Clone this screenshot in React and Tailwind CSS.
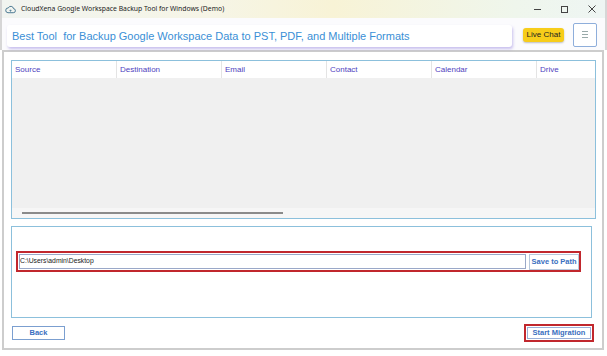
import React from "react";

function CloudIcon() {
  return (
    <svg width="11" height="11" viewBox="0 0 12 12" fill="none">
      <path d="M3.2 9.5h5.8a2.2 2.2 0 0 0 .3-4.4A3 3 0 0 0 3.6 4.3 2.6 2.6 0 0 0 3.2 9.5z" stroke="#3d6f8a" strokeWidth="1" />
      <path d="M5 7.4l1-1 1 1M6 6.4v2" stroke="#3d6f8a" strokeWidth="0.8" />
    </svg>
  );
}

const cols = ["Source", "Destination", "Email", "Contact", "Calendar", "Drive"];

export default function App() {
  return (
    <div className="w-[607px] h-[356px] bg-white overflow-hidden relative" style={{ fontFamily: '"Liberation Sans", Arial, sans-serif' }}>
      {/* Title bar */}
      <div className="h-[18px] flex items-center bg-[linear-gradient(90deg,#f1f4f0_0%,#f6f5e6_35%,#f8f3d6_55%,#eff6ec_85%,#eef5f3_100%)] border-l-2 border-r-2 border-[#d6d6d6]">
        <div className="ml-[3px] mt-[1px]"><CloudIcon /></div>
        <span className="ml-[5px] text-[6.8px] text-[#222]" style={{ fontFamily: '"Noto Sans", sans-serif' }}>CloudXena Google Workspace Backup Tool for Windows (Demo)</span>
        <div className="ml-auto flex items-center text-[#333]">
          <div className="w-[7px] h-px bg-[#444] mr-[20px]" />
          <div className="w-[7px] h-[7px] border border-[#444] mr-[20px]" />
          <svg width="8" height="8" viewBox="0 0 8 8" className="mr-[9px]"><path d="M0.5 0.5l7 7M7.5 0.5l-7 7" stroke="#444" strokeWidth="1" /></svg>
        </div>
      </div>
      {/* Header row */}
      <div className="h-[32px] flex items-center bg-[#fbfbfd] border-l-2 border-r-2 border-[#d6d6d6]">
        <div className="ml-[5px] mt-[4px] w-[505px] h-[22px] bg-white rounded-[3px] shadow-[1px_2px_3px_rgba(140,120,220,0.45)] flex items-center pl-[5px]">
          <span className="text-[11px] text-[#3a8fd6] whitespace-pre">Best Tool  for Backup Google Workspace Data to PST, PDF, and Multiple Formats</span>
        </div>
        <div className="ml-[11px] mt-[2px] w-[41px] h-[14px] bg-[#f7cd1a] rounded-[3px] shadow-[0_1px_2px_rgba(0,0,0,0.25)] flex items-center justify-center text-[8px] text-[#222]">Live Chat</div>
        <div className="ml-[9px] mt-[1px] w-[24px] h-[24px] bg-white border border-[#8eaedb] rounded-[2px] flex items-center justify-center">
          <div className="flex flex-col gap-[2px]">
            <div className="w-[6px] h-px bg-[#9aa]" />
            <div className="w-[6px] h-px bg-[#9aa]" />
            <div className="w-[6px] h-px bg-[#9aa]" />
          </div>
        </div>
      </div>
      {/* Group box */}
      <div className="ml-[2px] w-[602px] h-[300px] border-2 border-[#cdcdcd] bg-white flex flex-col">
        {/* Table panel */}
        <div className="mt-[8px] ml-[7px] w-[585px] h-[159px] border border-[#8cc0dc] bg-[#f0f0f0] flex flex-col overflow-hidden">
          <div className="h-[17px] bg-white flex shrink-0">
            {cols.map((c, i) => (
              <div key={c} className={"w-[105px] shrink-0 h-full flex items-center pl-[3px] text-[8px] text-[#4f3fc0] " + (i < 5 ? "border-r border-[#e4e4e4]" : "")}>{c}</div>
            ))}
          </div>
          <div className="flex-1" />
          <div className="h-[10px] bg-[#f6f6f6] flex items-center">
            <div className="ml-[10px] w-[261px] h-[1.5px] bg-[#8a8a8a]" />
          </div>
        </div>
        {/* Path panel */}
        <div className="mt-[7px] ml-[7px] w-[581px] h-[92px] border border-[#8cc0dc] bg-white">
          <div className="mt-[24px] ml-[4px] w-[565px] h-[21px] border-2 border-[#c1272d] flex items-center">
            <div className="ml-px w-[508px] h-[15px] border border-[#9aa8c8] bg-white flex items-center text-[6.8px] text-[#222]">C:\Users\admin\Desktop</div>
            <div className="ml-[3px] w-[50px] h-[16px] border border-[#b8c8dc] bg-white flex items-center justify-center text-[7.5px] font-bold text-[#3a6fc0]">Save to Path</div>
          </div>
        </div>
        {/* Bottom row */}
        <div className="mt-[6px] flex items-center">
          <div className="ml-[8px] w-[53px] h-[14px] border border-[#7b9fd0] bg-white flex items-center justify-center text-[7.5px] font-bold text-[#3a6fc0]">Back</div>
          <div className="ml-auto mr-[8px] w-[70px] h-[18px] border-2 border-[#c1272d] flex items-center justify-center">
            <div className="w-[64px] h-[12px] border border-[#9ab0d8] bg-white flex items-center justify-center text-[7.5px] font-bold text-[#3a6fc0]">Start Migration</div>
          </div>
        </div>
      </div>
    </div>
  );
}
